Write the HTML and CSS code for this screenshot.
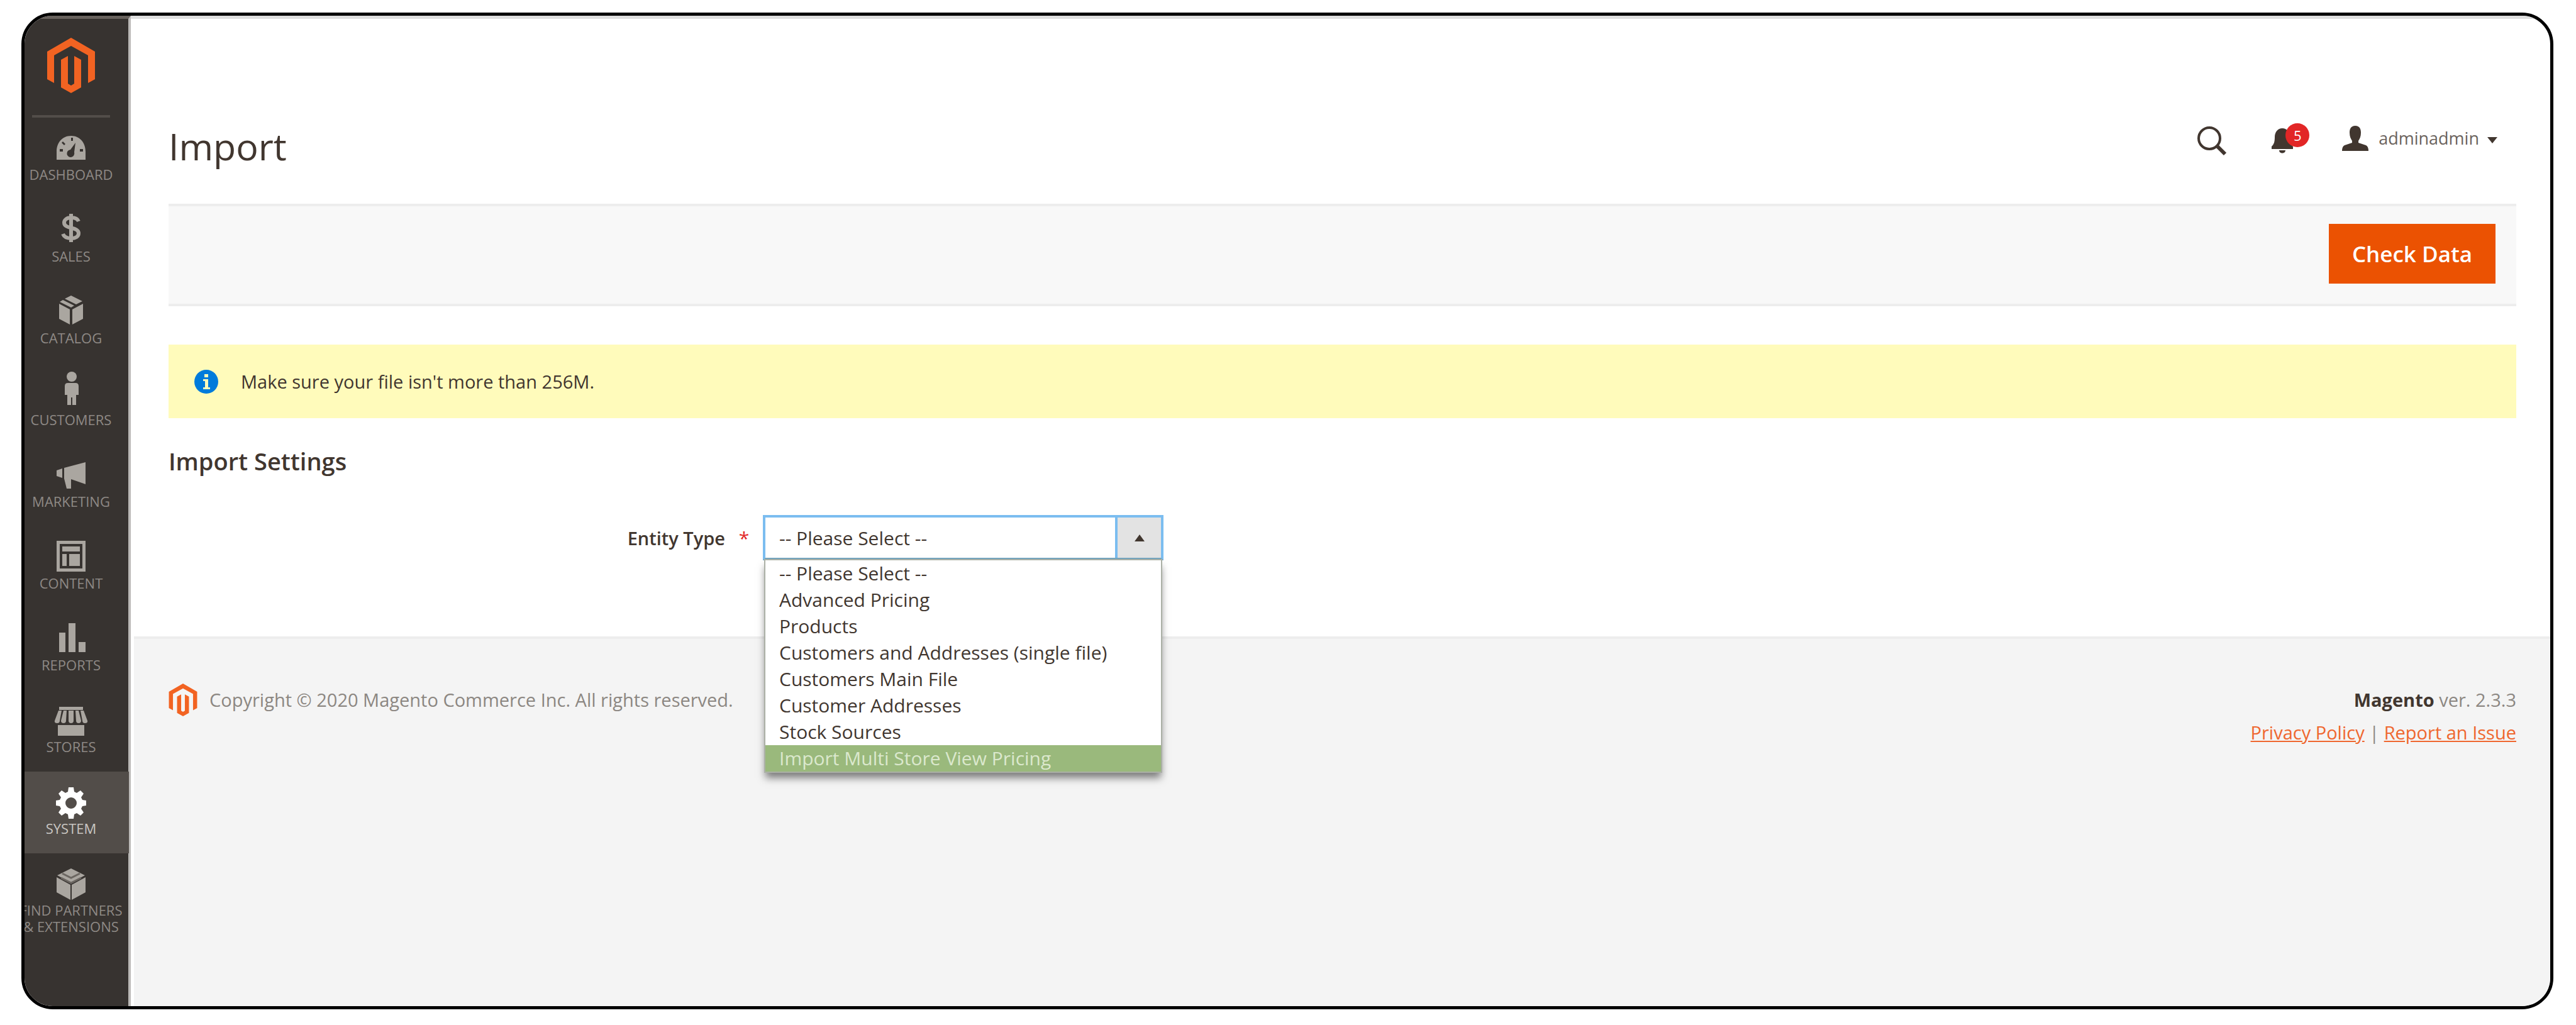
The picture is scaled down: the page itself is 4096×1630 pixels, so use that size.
FILE: index.html
```html
<!DOCTYPE html>
<html lang="en">
<head>
  <meta charset="UTF-8">
  <meta name="viewport" content="width=device-width, initial-scale=1.0">
  <title>Import / Magento Admin</title>
  <link rel="stylesheet" href="styles.css">
</head>
<body>
  <div class="frame">
    <aside class="sidebar">
      <div class="menu-wrapper">
        <a class="logo" href="#" aria-label="Magento Admin Panel">
          <svg width="76" height="88" viewBox="0 0 76 88">
            <path d="M38 0 76 22V66L65 72V28L38 13 11 28V72L0 66V22Z"/>
            <path d="M33 29V73L38 76 43 73V29L54 35V79L38 88 22 79V35Z"/>
          </svg>
        </a>
        <nav>
          <ul class="menu">
            <li><a href="#">
              <svg class="icon" viewBox="0 0 56 64"><path fill-rule="evenodd" d="M5 55V42C5 28 14 17 28 17S51 28 51 42V55ZM35 28 27 39A6 6 0 1 0 33 43ZM28 20h3v5h-3ZM10 38h5v4h-5ZM42 38h5v4h-5ZM15 26l4 4-2 2-4-4Z"/></svg>
              Dashboard</a></li>
            <li><a href="#">
              <svg class="icon line" viewBox="0 0 56 64"><path stroke-width="6" d="M40 23C38 18 33 17 28 17 21 17 17 21 17 25 17 36 40 31 40 42 40 47 35 50 28 50 22 50 17 48 15 43M28 11V56"/></svg>
              Sales</a></li>
            <li><a href="#">
              <svg class="icon" viewBox="0 0 56 64"><path d="M28 11 46 20 36 25 18 16ZM15 18 33 27 28 30 10 21ZM9 24 26 33V57L9 48ZM47 24 30 33V57L47 48Z"/></svg>
              Catalog</a></li>
            <li><a href="#">
              <svg class="icon" viewBox="0 0 56 64"><circle cx="29" cy="10" r="8"/><path d="M23 20H35Q40 20 40 25V39H36V55H30V43H28V55H22V39H18V25Q18 20 23 20Z"/></svg>
              Customers</a></li>
            <li><a href="#">
              <svg class="icon" viewBox="0 0 56 64"><path d="M5 29 14 26V41L5 38ZM17 25 51 16V51L28 43V58H21L17 42Z"/></svg>
              Marketing</a></li>
            <li><a href="#">
              <svg class="icon" viewBox="0 0 56 64"><path fill-rule="evenodd" d="M5 11H51V60H5ZM10 16V55H46V16ZM14 20H42V28H14ZM14 32H21V51H14ZM25 32H42V51H25Z"/></svg>
              Content</a></li>
            <li><a href="#">
              <svg class="icon" viewBox="0 0 56 64"><path d="M9 27H19V58H9ZM24 12H35V58H24ZM40 42H51V58H40Z"/></svg>
              Reports</a></li>
            <li><a href="#">
              <svg class="icon" viewBox="0 0 56 64"><path d="M9 15H47V20H9ZM8 21H13L10 37Q10 41 6 41 1 41 2 37ZM16 21H21L20 37Q20 41 16 41 12 41 12 37ZM24 21H32V37Q32 41 28 41 24 41 24 37ZM35 21H40L44 37Q44 41 40 41 36 41 36 37ZM43 21H48L54 37Q55 41 50 41 46 41 46 37ZM7 44H49V61H7Z"/></svg>
              Stores</a></li>
            <li class="active"><a href="#">
              <svg class="icon" viewBox="0 0 56 64"><path fill-rule="evenodd" d="M24 13H32L33 20 37 22 43 18 48 23 44 29 46 33 52 34V42L46 43 44 47 48 53 43 58 37 54 33 56 32 63H24L23 56 19 54 13 58 8 53 12 47 10 43 4 42V34L10 33 12 29 8 23 13 18 19 22 23 20ZM28 29A9 9 0 1 0 28 47 9 9 0 1 0 28 29Z"/></svg>
              System</a></li>
            <li><a href="#">
              <svg class="icon" viewBox="0 0 56 64"><path d="M28 12 50 23 28 35 6 23ZM5 26 27 38V62L5 50ZM51 26 29 38V62L51 50Z"/><path class="cut" d="M12 27 28 35 44 27M14 20 28 27 42 20"/></svg>
              Find Partners<br>&amp; Extensions</a></li>
          </ul>
        </nav>
      </div>
    </aside>

    <div class="page">
      <main>
        <header class="page-header">
          <h1>Import</h1>
          <div class="header-tools">
            <button class="tool" type="button" aria-label="Search">
              <svg width="48" height="48" viewBox="0 0 48 48"><circle cx="20" cy="20" r="17" fill="none" stroke="#41362f" stroke-width="4"/><path d="M32 32 45 45" stroke="#41362f" stroke-width="6"/></svg>
            </button>
            <button class="tool bell" type="button" aria-label="Notifications">
              <svg width="40" height="40" viewBox="0 0 40 40"><path fill="#41362f" d="M17 0C24 0 29 6 29 14 29 23 31 26 34 29V33H0V29C3 26 5 23 5 14 5 6 10 0 17 0ZM12 35H22C22 41 12 41 12 35Z"/></svg>
              <span class="badge">5</span>
            </button>
            <button class="tool user" type="button">
              <svg width="42" height="40" viewBox="0 0 42 40"><path fill="#41362f" d="M21 0C28 0 30 5 30 11 30 17 28 21 26 24V27L38 31Q42 33 42 40H0Q0 33 4 31L16 27V24C14 21 12 17 12 11 12 5 14 0 21 0Z"/></svg>
              <span>adminadmin</span>
              <svg class="caret" width="16" height="10" viewBox="0 0 16 10"><path fill="#41362f" d="M0 0H16L8 10Z"/></svg>
            </button>
          </div>
        </header>

        <div class="page-actions">
          <button class="primary" type="button">Check Data</button>
        </div>

        <div class="message">
          <svg width="40" height="40" viewBox="0 0 40 40"><circle cx="20" cy="20" r="19" fill="#007bdb"/><path fill="#fffbbb" d="M17 8H23V13H17ZM15 16H23V29H26V32H15V29H18V19H15Z"/></svg>
          <span>Make sure your file isn't more than 256M.</span>
        </div>

        <form class="import-form">
          <h2>Import Settings</h2>
          <div class="field">
            <label for="entity">Entity Type</label>
            <span class="required">*</span>
            <div class="control">
              <select id="entity">
                <option>-- Please Select --</option>
              </select>
              <span class="arrow"></span>
              <ul class="options" role="listbox" aria-label="Entity Type">
                <li role="option">-- Please Select --</li>
                <li role="option">Advanced Pricing</li>
                <li role="option">Products</li>
                <li role="option">Customers and Addresses (single file)</li>
                <li role="option">Customers Main File</li>
                <li role="option">Customer Addresses</li>
                <li role="option">Stock Sources</li>
                <li role="option" class="selected" aria-selected="true">Import Multi Store View Pricing</li>
              </ul>
            </div>
          </div>
        </form>
      </main>

      <footer>
        <div class="copyright">
          <svg width="46" height="52" viewBox="0 0 76 88">
            <path d="M38 0 76 22V66L65 72V28L38 13 11 28V72L0 66V22Z"/>
            <path d="M33 29V73L38 76 43 73V29L54 35V79L38 88 22 79V35Z"/>
          </svg>
          <span>Copyright © 2020 Magento Commerce Inc. All rights reserved.</span>
        </div>
        <div class="version">
          <p><strong>Magento</strong> ver. 2.3.3</p>
          <p><a href="#">Privacy Policy</a> | <a href="#">Report an Issue</a></p>
        </div>
      </footer>
    </div>
  </div>
</body>
</html>
```
FILE: styles.css
```css
* {
  box-sizing: border-box;
}
body {
  margin: 0;
  padding: 20px 36px 25px 34px;
  background-color: #fff;
  color: #41362f;
  font-family: "Open Sans", "Noto Sans", sans-serif;
  font-size: 30px;
}
ul, p, h1, h2 {
  margin: 0;
  padding: 0;
}
ul {
  list-style: none;
}
button {
  border: 0;
  padding: 0;
  font-family: inherit;
}
svg {
  display: block;
  flex-shrink: 0;
}
/* Rounded window */
.frame {
  display: flex;
  min-height: calc(100vh - 45px);
  border: 5px solid #000;
  border-radius: 50px;
  overflow: hidden;
}
/* Sidebar */
.sidebar {
  width: 169px;
  flex-shrink: 0;
  background-color: #373330;
  border-top: 5px solid #68625d;
  border-right: 4px solid #bcbab8;
}
.menu-wrapper {
  width: 184px;
  margin-left: -18px;
}
.logo {
  display: flex;
  justify-content: center;
  width: 124px;
  margin: 0 auto;
  padding: 30px 0 35px;
  border-bottom: 4px solid #524d49;
}
.logo svg, .copyright svg {
  fill: #f26322;
}
.menu a {
  display: block;
  height: 130px;
  padding-top: 12px;
  color: #8e8985;
  font-size: 22px;
  line-height: 26px;
  text-align: center;
  text-decoration: none;
  text-transform: uppercase;
  white-space: nowrap;
}
.icon {
  width: 56px;
  height: 64px;
  margin: 0 auto 1px;
  fill: #aaa6a0;
}
.icon.line {
  fill: none;
  stroke: #aaa6a0;
}
.icon .cut {
  fill: none;
  stroke: #6b6661;
  stroke-width: 3;
}
.menu .active {
  background-color: #524d49;
}
.menu .active a {
  color: #c9c6c2;
}
.menu .active .icon {
  fill: #fff;
}
/* Page */
.page {
  display: flex;
  flex-direction: column;
  flex: 1;
  border-top: 5px solid #dedede;
}
main {
  padding: 0 54px 121px 60px;
}
.page-header {
  display: flex;
  justify-content: space-between;
  height: 294px;
  padding: 160px 30px 0 0;
}
h1 {
  font-size: 59px;
  font-weight: 400;
  line-height: 84px;
}
.header-tools {
  display: flex;
  align-items: flex-start;
  padding-top: 10px;
}
.tool {
  display: flex;
  background: none;
  color: #6b635d;
  font-size: 27px;
  line-height: 40px;
}
.bell {
  position: relative;
  margin-left: 71px;
  padding-top: 4px;
}
.badge {
  position: absolute;
  top: -4px;
  left: 22px;
  width: 38px;
  height: 38px;
  border-radius: 50%;
  background-color: #e22626;
  color: #fff;
  font-size: 22px;
  line-height: 38px;
  text-align: center;
}
.user {
  margin-left: 72px;
}
.user span {
  margin-left: 16px;
}
.caret {
  margin: 18px 0 0 13px;
}
.page-actions {
  display: flex;
  justify-content: flex-end;
  align-items: center;
  height: 163px;
  padding: 0 33px 4px 0;
  background-color: #f8f8f8;
  border-top: 4px solid #ededed;
  border-bottom: 4px solid #ededed;
}
.primary {
  width: 265px;
  height: 95px;
  background-color: #eb5202;
  color: #fff;
  font-size: 35px;
  font-weight: 600;
}
.message {
  display: flex;
  align-items: center;
  height: 117px;
  margin-top: 61px;
  padding-left: 40px;
  background-color: #fffbbb;
  font-size: 29px;
}
.message span {
  margin-left: 35px;
}
/* Import form */
h2 {
  margin-top: 44px;
  font-size: 38px;
  font-weight: 600;
  line-height: 48px;
}
.field {
  display: flex;
  align-items: center;
  margin-top: 62px;
}
.field label {
  width: 885px;
  font-size: 29px;
  font-weight: 600;
  text-align: right;
}
.required {
  width: 60px;
  color: #e22626;
  text-align: center;
}
.control {
  position: relative;
  width: 637px;
}
.control select {
  display: block;
  width: 100%;
  height: 72px;
  padding: 0 22px;
  border: 4px solid #7bbdf0;
  border-bottom-color: #75a6c0;
  border-radius: 0;
  background-color: #fff;
  color: #41362f;
  font-family: inherit;
  font-size: 30px;
  appearance: none;
}
.arrow {
  position: absolute;
  top: 4px;
  right: 4px;
  display: flex;
  align-items: center;
  justify-content: center;
  width: 73px;
  height: 64px;
  background-color: #e3e3e3;
  border-left: 4px solid #7bbdf0;
  pointer-events: none;
}
.arrow::before {
  content: "";
  border: 8px solid transparent;
  border-top: 0;
  border-bottom: 11px solid #41362f;
}
.options {
  position: absolute;
  top: 100%;
  left: 4px;
  right: 4px;
  background-color: #fff;
  box-shadow: 0 0 0 2px #abb0a6, 0 10px 12px rgba(0, 0, 0, 0.5);
}
.options li {
  padding-left: 22px;
  line-height: 42px;
}
.options .selected {
  background-color: #9ab97c;
  color: #dbe8cd;
}
/* Footer */
footer {
  display: flex;
  justify-content: space-between;
  flex: 1;
  margin-left: 5px;
  padding: 71px 54px 0 55px;
  background-color: #f4f4f4;
  border-top: 4px solid #ededed;
  color: #8c8782;
  font-size: 29px;
  line-height: 52px;
}
.copyright {
  display: flex;
}
.copyright span {
  margin-left: 19px;
}
.version {
  text-align: right;
}
.version strong {
  color: #41362f;
  font-weight: 700;
}
.version a {
  color: #ef672f;
}
```
